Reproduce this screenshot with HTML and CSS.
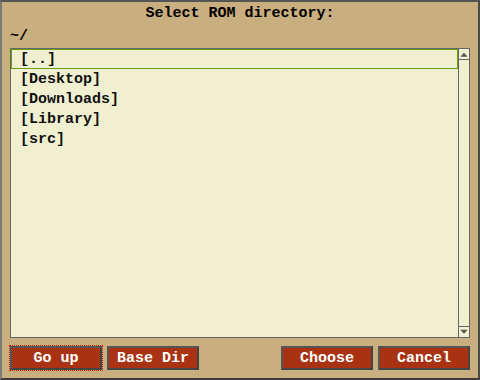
FILE: index.html
```html
<!DOCTYPE html>
<html>
<head>
<meta charset="utf-8">
<link rel="stylesheet" href="styles.css">
</head>
<body>
<div class="window">
  <div class="title">Select ROM directory:</div>
  <div class="path">~/</div>
  <div class="list">
    <div class="items">
      <div class="row selected">[..]</div>
      <div class="row">[Desktop]</div>
      <div class="row">[Downloads]</div>
      <div class="row">[Library]</div>
      <div class="row">[src]</div>
    </div>
    <div class="scrollbar">
      <div class="arrow up"><svg width="11" height="11" viewBox="0 0 11 11"><polygon points="1.5,8 9.5,8 5.5,3.5" fill="#555"/></svg></div>
      <div class="track"></div>
      <div class="arrow down"><svg width="11" height="10" viewBox="0 0 11 10"><polygon points="1.5,2.5 9.5,2.5 5.5,7" fill="#555"/></svg></div>
    </div>
  </div>
  <div class="buttons">
    <div class="group">
      <div class="btn focused">Go up</div>
      <div class="btn">Base Dir</div>
    </div>
    <div class="group">
      <div class="btn">Choose</div>
      <div class="btn">Cancel</div>
    </div>
  </div>
</div>
</body>
</html>
```

FILE: styles.css
```css
* { box-sizing: border-box; }
html, body { margin: 0; padding: 0; }
body {
  width: 480px;
  height: 380px;
  font-family: "Liberation Mono", "DejaVu Sans Mono", monospace;
  font-weight: bold;
  font-size: 15px;
  color: #000;
}
.window {
  width: 480px;
  height: 380px;
  background: #c9ae7f;
  border-top: 2px solid #555;
  border-left: 2px solid #7a7a7a;
  border-right: 2px solid #4a4a4a;
  border-bottom: 2px solid #3c3c3c;
  padding: 0 8px;
  display: flex;
  flex-direction: column;
}
.title {
  height: 24px;
  line-height: 24px;
  text-align: center;
}
.path {
  height: 22px;
  line-height: 22px;
}
.list {
  height: 290px;
  border: 1px solid #666;
  border-right: none;
  background: #f0f0d0;
  display: flex;
}
.items {
  flex: 1;
  display: flex;
  flex-direction: column;
}
.row {
  height: 20px;
  padding-top: 2px;
  line-height: 18px;
  padding-left: 9px;
  color: #111;
}
.row.selected {
  border: 1px solid #66a000;
  padding-top: 1px;
  line-height: 17px;
  padding-left: 8px;
}
.scrollbar {
  width: 12px;
  margin-top: -1px;
  margin-bottom: -1px;
  border-left: 1px solid #666;
  border-right: 1px solid #666;
  display: flex;
  flex-direction: column;
  background: #f0f0d0;
}
.arrow {
  height: 12px;
  display: flex;
  align-items: center;
  justify-content: center;
  border-top: 1px solid #666;
}
.arrow.up {
  border-bottom: 1px solid #666;
}
.arrow.down {
  border-bottom: 1px solid #666;
}
.track { flex: 1; }
.buttons {
  flex: 1;
  display: flex;
  justify-content: space-between;
  align-items: flex-start;
  padding-top: 8px;
}
.group {
  display: flex;
  gap: 5px;
}
.btn {
  width: 92px;
  height: 24px;
  padding-top: 1px;
  line-height: 19px;
  background: #a83212;
  color: #fff;
  text-align: center;
  border: 2px solid #555;
  border-right-color: #444;
  border-bottom-color: #444;
}
.btn.focused {
  outline: 1px dotted #e01010;
  outline-offset: 0;
}
```
